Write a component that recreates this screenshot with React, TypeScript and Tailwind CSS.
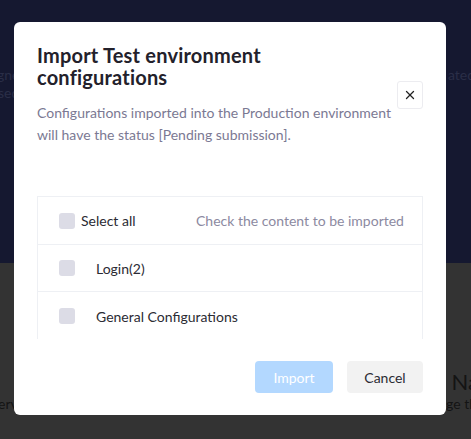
import { X } from "lucide-react";

const rows = [
    { id: "login", label: "Login(2)" },
    { id: "general", label: "General Configurations" },
];

const Box = () => <span className="h-4 w-4 shrink-0 rounded-[3px] bg-[#dcdce6]" />;

const App = () => {
    return (
        <div className="relative h-[439px] w-full overflow-hidden font-['Lato',sans-serif]">
            {/* page behind the overlay */}
            <div className="flex h-[263px] flex-col bg-[#151830] pt-[66px] text-[14px] leading-[18px] text-[#2a2e47]">
                <div className="flex justify-between whitespace-nowrap">
                    <span className="-ml-[3px]">gne</span>
                    <span className="-mr-[4px]">ated</span>
                </div>
                <div className="whitespace-nowrap">
                    <span className="-ml-[2px]">sed</span>
                </div>
            </div>
            <div className="flex h-[176px] flex-col bg-[#333333] pt-[106px] text-[#141414]">
                <div className="flex justify-end whitespace-nowrap text-[22px] leading-[26px]">
                    <span className="-mr-[8px]">e Na</span>
                </div>
                <div className="flex justify-between whitespace-nowrap text-[14px] leading-[18px]">
                    <span className="-ml-[2px]">erv</span>
                    <span className="-mr-[6px]">ge th</span>
                </div>
            </div>

            {/* modal */}
            <div className="absolute left-[14px] top-[22px] flex h-[393px] w-[432px] flex-col rounded-[6px] bg-white px-[23px] pt-[22px] pb-[22px]">
                <div className="flex items-center">
                    <div className="w-[360px] shrink-0">
                        <p className="w-[345px] text-[20px] font-bold leading-[22px] tracking-[0.2px] text-[#23212b]">Import Test environment configurations</p>
                        <p className="mt-[14px] text-[14px] leading-[22px] text-[#7b7993]">
                            Configurations imported into the Production environment will have the status [Pending submission].
                        </p>
                    </div>
                    <button className="ml-auto flex h-[28px] w-[26px] items-center justify-center rounded-[3px] border border-[#ececf0] bg-white text-[#222]">
                        <X className="h-[14px] w-[14px]" strokeWidth={2.2} />
                    </button>
                </div>

                <div className="mt-[50px] flex h-[143px] shrink-0 flex-col overflow-hidden border-x border-t border-[#eef0f4] text-[14px] text-[#2b2b33]">
                    <div className="flex h-[48px] shrink-0 items-center border-b border-[#eef0f4] pl-[21px]">
                        <label className="flex w-[137px] items-center gap-[6px]">
                            <Box />
                            <span>Select all</span>
                        </label>
                        <span className="text-[#8c8aa1]">Check the content to be imported</span>
                    </div>
                    {rows.map((row, i) => (
                        <div
                            key={row.id}
                            className={i < rows.length - 1
                                ? "flex h-[47px] shrink-0 items-center border-b border-[#eef0f4] pl-[21px]"
                                : "flex h-[48px] shrink-0 items-center pl-[21px]"}
                        >
                            <Box />
                            <span className="ml-[21px]">{row.label}</span>
                        </div>
                    ))}
                </div>

                <div className="mt-auto flex justify-end gap-[14px]">
                    <button className="h-[32px] w-[78px] rounded-[4px] bg-[#b3d8ff] text-[14px] text-white">Import</button>
                    <button className="h-[32px] w-[76px] rounded-[4px] bg-[#f2f2f2] text-[14px] text-[#2b2b33]">Cancel</button>
                </div>
            </div>
        </div>
    );
};

export default App;
